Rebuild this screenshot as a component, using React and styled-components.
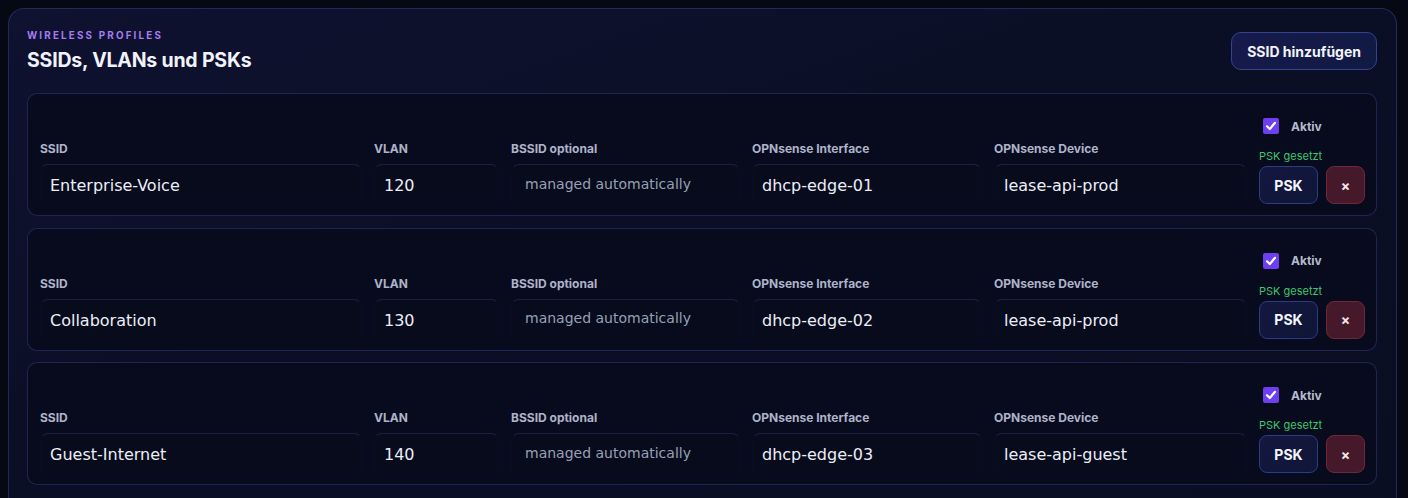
import React from "react";
import styled, { createGlobalStyle } from "styled-components";

const Global = createGlobalStyle`
  html, body { margin: 0; padding: 0; background: #060914; }
  body { font-family: Inter, "Noto Sans", sans-serif; color: #e8eaf4; }
  * { box-sizing: border-box; }
`;

const Page = styled.div`
  padding: 8px 11px 0 8px;
  height: 498px;
  overflow: hidden;
`;

const Panel = styled.section`
  border: 1px solid rgba(88, 100, 190, 0.32);
  border-radius: 16px;
  background: linear-gradient(160deg, #0f1230 0%, #0b0f26 40%, #0a0e22 100%);
  padding: 20px 19px 24px 18px;
  min-height: 520px;
`;

const Header = styled.header`
  display: flex;
  justify-content: space-between;
  align-items: center;
  margin-bottom: 20px;
`;

const Eyebrow = styled.div`
  font-size: 9.8px;
  font-weight: 700;
  letter-spacing: 2.2px;
  color: #a57cf2;
  line-height: 14px;
  text-transform: uppercase;
`;

const Title = styled.h2`
  margin: 4px 0 0;
  font-size: 19.5px;
  font-weight: 700;
  line-height: 26px;
  color: #f1f2fa;
  letter-spacing: -0.2px;
`;

const AddButton = styled.button`
  height: 38px;
  padding: 0 15px;
  border-radius: 10px;
  border: 1px solid #34438f;
  background: linear-gradient(135deg, #171a4c 0%, #101a42 100%);
  color: #f3f4fb;
  font-family: Inter, sans-serif;
  font-size: 14px;
  font-weight: 700;
  cursor: pointer;
`;

const List = styled.div`
  display: flex;
  flex-direction: column;
  gap: 11.5px;
`;

const Row = styled.div`
  display: grid;
  grid-template-columns: 322px 125px 229px 230px 253px 106px;
  column-gap: 12px;
  align-items: end;
  padding: 22px 12px 11px 12px;
  border: 1px solid rgba(70, 82, 170, 0.38);
  border-radius: 10px;
  background: #070b1d;
  height: 123px;
`;

const Field = styled.label`
  display: flex;
  flex-direction: column;
  gap: 8px;
`;

const Label = styled.span`
  font-size: 12px;
  font-weight: 700;
  color: #aeb3c9;
  line-height: 14px;
`;

const Input = styled.input`
  height: 40px;
  width: 100%;
  border: 1px solid transparent;
  border-top-color: rgba(110, 120, 200, 0.2);
  border-left-color: rgba(110, 120, 200, 0.03);
  border-right-color: rgba(110, 120, 200, 0.03);
  border-radius: 8px 8px 0 0;
  background: #070b1c;
  color: ${(p) => (p.$muted ? "#98a0b6" : "#eceef6")};
  font-family: "DejaVu Sans", sans-serif;
  font-size: ${(p) => (p.$muted ? "14px" : "16px")};
  padding: ${(p) => (p.$muted ? "0 13px 1px" : "3px 9px 0")};
  outline: none;
  &::placeholder { color: #98a0b6; }
`;

const Actions = styled.div`
  display: flex;
  flex-direction: column;
  align-items: flex-start;
`;

const Check = styled.label`
  display: flex;
  align-items: center;
  gap: 12px;
  margin-left: 4px;
  font-size: 12px;
  font-weight: 700;
  color: #b6bacd;
  height: 20px;
`;

const Box = styled.span`
  width: 16px;
  height: 16px;
  border-radius: 2px;
  background: #6d3ff0;
  display: inline-flex;
  align-items: center;
  justify-content: center;
`;

const Status = styled.span`
  margin-top: 13px;
  font-size: 11px;
  line-height: 14px;
  color: #3fc56e;
`;

const Buttons = styled.div`
  display: flex;
  gap: 8px;
  margin-top: 3px;
`;

const PskButton = styled.button`
  width: 59px;
  height: 38px;
  border-radius: 8px;
  border: 1px solid #2e3b85;
  background: linear-gradient(135deg, #141740 0%, #0f1636 100%);
  color: #f5f6fc;
  font-family: Inter, sans-serif;
  font-size: 14px;
  font-weight: 700;
`;

const DeleteButton = styled.button`
  width: 39px;
  height: 38px;
  border-radius: 8px;
  border: 1px solid #6e2838;
  background: #45182a;
  color: #f1e6ea;
  font-family: Inter, sans-serif;
  font-size: 14px;
  font-weight: 700;
  padding: 0;
`;

const profiles = [
  { ssid: "Enterprise-Voice", vlan: "120", iface: "dhcp-edge-01", device: "lease-api-prod" },
  { ssid: "Collaboration", vlan: "130", iface: "dhcp-edge-02", device: "lease-api-prod" },
  { ssid: "Guest-Internet", vlan: "140", iface: "dhcp-edge-03", device: "lease-api-guest" },
];

export default function App() {
  return (
    <>
      <Global />
      <Page>
        <Panel>
          <Header>
            <div>
              <Eyebrow>Wireless Profiles</Eyebrow>
              <Title>SSIDs, VLANs und PSKs</Title>
            </div>
            <AddButton>SSID hinzufügen</AddButton>
          </Header>
          <List>
            {profiles.map((p) => (
              <Row key={p.ssid}>
                <Field>
                  <Label>SSID</Label>
                  <Input defaultValue={p.ssid} />
                </Field>
                <Field>
                  <Label>VLAN</Label>
                  <Input defaultValue={p.vlan} />
                </Field>
                <Field>
                  <Label>BSSID optional</Label>
                  <Input $muted placeholder="managed automatically" />
                </Field>
                <Field>
                  <Label>OPNsense Interface</Label>
                  <Input defaultValue={p.iface} />
                </Field>
                <Field>
                  <Label>OPNsense Device</Label>
                  <Input defaultValue={p.device} />
                </Field>
                <Actions>
                  <Check>
                    <Box>
                      <svg width="12" height="12" viewBox="0 0 12 12">
                        <path d="M2 6.3 L4.8 9 L10 2.8" fill="none" stroke="#fff" strokeWidth="2.2" strokeLinecap="round" strokeLinejoin="round" />
                      </svg>
                    </Box>
                    Aktiv
                  </Check>
                  <Status>PSK gesetzt</Status>
                  <Buttons>
                    <PskButton>PSK</PskButton>
                    <DeleteButton>×</DeleteButton>
                  </Buttons>
                </Actions>
              </Row>
            ))}
          </List>
        </Panel>
      </Page>
    </>
  );
}
